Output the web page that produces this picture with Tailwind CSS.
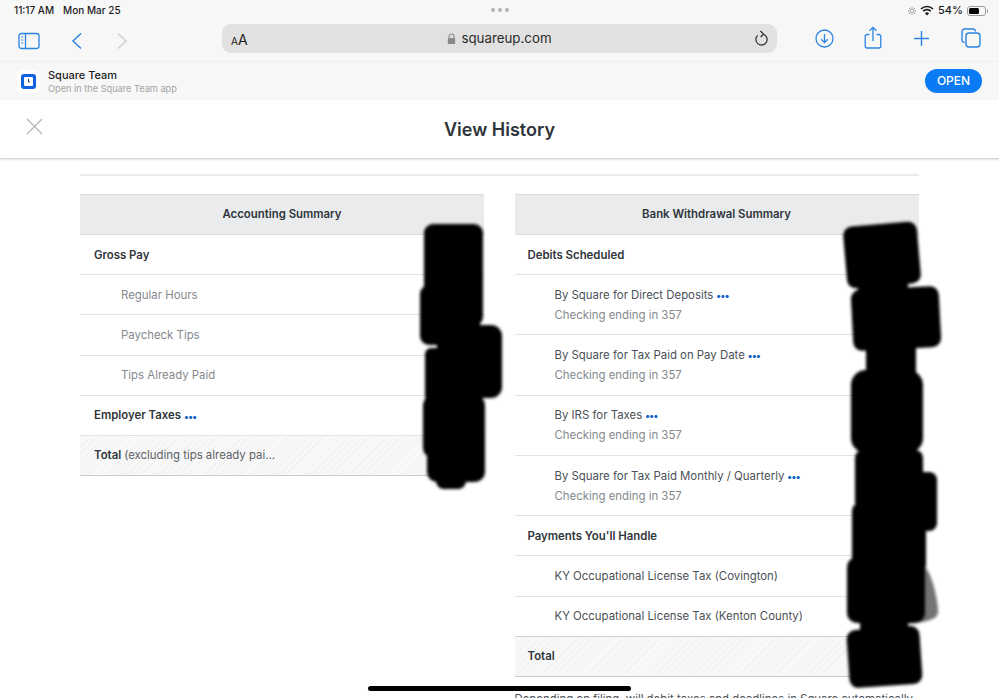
<!DOCTYPE html>
<html lang="en">
<head>
  <meta charset="UTF-8" />
  <title>View History</title>
  <script src="https://cdn.jsdelivr.net/npm/@tailwindcss/browser@4"></script>
</head>
<body class="bg-white font-['Inter',sans-serif] text-[#2f353b]">
<div class="relative w-[999px] h-[698px] overflow-hidden">

  <!-- Browser chrome -->
  <header class="h-[62px] bg-[#f7f7f7] border-b border-[#efefef]">
    <div class="h-[20px] pt-[1px] px-[14px] flex items-center justify-between text-[10px] text-[#1c1c1e] relative">
      <div class="flex gap-[9px] font-medium"><span>11:17 AM</span><span>Mon Mar 25</span></div>
      <div class="absolute left-[491px] top-[8px] flex gap-[3px]">
        <span class="w-[4px] h-[4px] rounded-full bg-[#b5b5b5]"></span>
        <span class="w-[4px] h-[4px] rounded-full bg-[#b5b5b5]"></span>
        <span class="w-[4px] h-[4px] rounded-full bg-[#b5b5b5]"></span>
      </div>
      <div class="flex items-center gap-[3px] font-medium text-[11px] mr-[-1px]">
        <svg width="10" height="10" viewBox="0 0 10 10" stroke="#9a9a9a" stroke-width="1"><path d="M5 1v3M5 6v3M1 5h3M6 5h3M2 2l2 2M6 6l2 2M8 2L6 4M4 6L2 8"/></svg>
        <svg width="14" height="11" viewBox="0 0 14 11" fill="none" stroke="#1c1c1e" stroke-width="1.7"><path d="M1 4a8.5 8.5 0 0 1 12 0M3.2 6.2a5.4 5.4 0 0 1 7.6 0"/><path d="M7 10.5 4.9 8.2a3 3 0 0 1 4.2 0Z" fill="#1c1c1e" stroke="none"/></svg>
        <span class="ml-[1px]">54%</span>
        <span class="relative ml-[1px] w-[19px] h-[10px] rounded-[3px] border border-[#9c9c9c] p-[1px] flex">
          <span class="w-[10px] bg-black rounded-[1.5px]"></span>
          <span class="absolute right-[-3px] top-[2px] w-[1.5px] h-[4px] bg-[#9c9c9c] rounded-r"></span>
        </span>
      </div>
    </div>
    <div class="relative h-[41px] flex items-center">
      <svg class="ml-[18px]" width="23" height="18" viewBox="0 0 23 18" fill="none" stroke="#2a84e0" stroke-width="1.3"><rect x="1" y="1.5" width="20" height="15" rx="2.5"/><path d="M7.5 1.5v15"/><path d="M3.2 5h2M3.2 8h2M3.2 11h2" stroke-width="1.2"/></svg>
      <svg class="ml-[30px]" width="12" height="18" viewBox="0 0 12 18" fill="none" stroke="#2a84e0" stroke-width="1.5"><path d="M10 1.5 2 9l8 7.5"/></svg>
      <svg class="ml-[33px]" width="12" height="18" viewBox="0 0 12 18" fill="none" stroke="#d0d0d0" stroke-width="1.5"><path d="M2 1.5 10 9l-8 7.5"/></svg>
      <div class="absolute left-[222px] top-[4px] w-[555px] h-[29px] pt-[1px] rounded-[9px] bg-[#e1e1e1] flex items-center justify-center">
        <span class="absolute left-[9px] top-[6px] text-[#222] leading-[18px]"><span class="text-[10px]">A</span><span class="text-[14px]">A</span></span>
        <svg class="mr-[5px]" width="9" height="12" viewBox="0 0 9 12"><path d="M2 5V3.5a2.5 2.5 0 0 1 5 0V5" fill="none" stroke="#8a8a8a" stroke-width="1.1"/><rect x="0.8" y="5" width="7.4" height="6" rx="1" fill="#8a8a8a"/></svg>
        <span class="text-[13.3px] text-[#2b2b2b]">squareup.com</span>
        <svg class="absolute right-[8px] top-[6px]" width="15" height="17" viewBox="0 0 15 17" fill="none" stroke="#2b2b2b" stroke-width="1.2"><path d="M9.500 4.200A5.600 5.600 0 1 1 3.600 5.400"/><path d="M6.400 1 9.600 4.200 6.600 7"/></svg>
      </div>
      <svg class="absolute left-[815px] top-[9px]" width="19" height="19" viewBox="0 0 19 19" fill="none" stroke="#2a84e0" stroke-width="1.3"><circle cx="9.5" cy="9.5" r="8.5"/><path d="M9.5 5v8.5M6.2 10.3l3.3 3.3 3.3-3.3"/></svg>
      <svg class="absolute left-[864px] top-[6px]" width="18" height="23" viewBox="0 0 18 23" fill="none" stroke="#2a84e0" stroke-width="1.3"><path d="M5.5 8.5H3a1.8 1.8 0 0 0-1.8 1.8v9.9A1.8 1.8 0 0 0 3 22h12a1.8 1.8 0 0 0 1.8-1.8v-9.9A1.8 1.8 0 0 0 15 8.500h-2.500"/><path d="M9 15V1.500M5.600 4.800 9 1.400l3.400 3.400"/></svg>
      <svg class="absolute left-[913px] top-[10px]" width="17" height="17" viewBox="0 0 17 17" fill="none" stroke="#2a84e0" stroke-width="1.4"><path d="M8.500 1v15M1 8.500h15"/></svg>
      <svg class="absolute left-[961px] top-[8px]" width="20" height="20" viewBox="0 0 20 20" fill="none" stroke="#2a84e0" stroke-width="1.4"><rect x="5" y="5" width="14" height="14" rx="3"/><path d="M3.500 14.500A2.500 2.500 0 0 1 1 12V3.500A2.500 2.500 0 0 1 3.500 1H12a2.500 2.500 0 0 1 2.500 2.500"/></svg>
    </div>
  </header>

  <!-- App banner -->
  <div class="h-[38px] bg-[#f7f7f7] flex items-center pl-[17px] pr-[17px]">
    <div class="w-[23px] h-[23px] rounded-[5px] bg-white flex items-center justify-center">
      <div class="w-[15px] h-[15px] rounded-[3px] bg-[#0f62e0] flex items-center justify-center">
        <svg width="9" height="9" viewBox="0 0 9 9"><rect width="9" height="9" rx="1" fill="#fff"/><path d="M4.500 2v3h1.500" fill="none" stroke="#123a7a" stroke-width="1"/></svg>
      </div>
    </div>
    <div class="ml-[8px] pt-[1px] flex-1">
      <div class="text-[11px] leading-[13px] font-medium text-[#1c1c1e]">Square Team</div>
      <div class="text-[9.2px] leading-[13px] text-[#a3a3a3]">Open in the Square Team app</div>
    </div>
    <button class="w-[57px] h-[24px] rounded-full bg-[#0a7bf5] text-white text-[12px] font-medium">OPEN</button>
  </div>

  <!-- Modal header -->
  <div class="relative h-[59px] pt-[1px] bg-white border-b border-[#d6d6d6] shadow-[0_1px_2px_rgba(0,0,0,0.12)] flex items-center justify-center">
    <svg class="absolute left-[26px] top-[18px]" width="17" height="17" viewBox="0 0 17 17" stroke="#b8b8b8" stroke-width="1.4"><path d="M1 1l15 15M16 1 1 16"/></svg>
    <h1 class="text-[18px] font-semibold text-[#2f353b]">View History</h1>
  </div>

  <!-- Content -->
  <main class="px-[80px] pt-[15px]">
    <div class="border-t-2 border-[#ececec] w-[839px]"></div>
    <div class="mt-[18px] flex gap-[30.500px] w-[839px] text-[11.4px]">

      <section class="w-[404px]">
        <div class="h-[41px] pt-[1px] flex items-center justify-center bg-[#e9ebed] border-t border-b border-[#d9dbdd] font-semibold">Accounting Summary</div>
        <div class="h-[40.180px] pt-[1px] flex items-center pl-[14px] border-b border-[#e3e3e3] font-semibold">Gross Pay</div>
        <div class="h-[40.180px] pt-[1px] flex items-center pl-[41px] border-b border-[#e3e3e3] text-[#85898d]">Regular Hours</div>
        <div class="h-[40.180px] pt-[1px] flex items-center pl-[41px] border-b border-[#e3e3e3] text-[#85898d]">Paycheck Tips</div>
        <div class="h-[40.180px] pt-[1px] flex items-center pl-[41px] border-b border-[#e3e3e3] text-[#85898d]">Tips Already Paid</div>
        <div class="h-[40.180px] pt-[1px] flex items-center pl-[14px] border-b border-[#e3e3e3] font-semibold">Employer Taxes<span class="ml-[3px] text-[10px] text-[#0f62c9] font-bold tracking-[-0.6px] leading-none">•••</span></div>
        <div class="h-[40.180px] pt-[1px] flex items-center pl-[14px] border-b border-[#c9c9c9] bg-[repeating-linear-gradient(135deg,#f0f0f0_0,#f0f0f0_1px,#fbfbfb_1px,#fbfbfb_2.500px)]"><span class="font-semibold">Total</span><span class="ml-[3px] text-[#5c6167]">(excluding tips already pai...</span></div>
      </section>

      <section class="w-[404px]">
        <div class="h-[41px] pt-[1px] flex items-center justify-center bg-[#e9ebed] border-t border-b border-[#d9dbdd] font-semibold">Bank Withdrawal Summary</div>
        <div class="h-[40.180px] pt-[1px] flex items-center pl-[13px] border-b border-[#e3e3e3] font-semibold">Debits Scheduled</div>
        <div class="h-[60.270px] pt-[1px] flex flex-col justify-center pl-[40px] border-b border-[#e3e3e3] gap-[5px] leading-[15px]">
          <div class="text-[#4a5056]">By Square for Direct Deposits<span class="ml-[3px] text-[10px] text-[#0f62c9] font-bold tracking-[-0.6px]">•••</span></div>
          <div class="text-[#85898d]">Checking ending in 357</div>
        </div>
        <div class="h-[60.270px] pt-[1px] flex flex-col justify-center pl-[40px] border-b border-[#e3e3e3] gap-[5px] leading-[15px]">
          <div class="text-[#4a5056]">By Square for Tax Paid on Pay Date<span class="ml-[3px] text-[10px] text-[#0f62c9] font-bold tracking-[-0.6px]">•••</span></div>
          <div class="text-[#85898d]">Checking ending in 357</div>
        </div>
        <div class="h-[60.270px] pt-[1px] flex flex-col justify-center pl-[40px] border-b border-[#e3e3e3] gap-[5px] leading-[15px]">
          <div class="text-[#4a5056]">By IRS for Taxes<span class="ml-[3px] text-[10px] text-[#0f62c9] font-bold tracking-[-0.6px]">•••</span></div>
          <div class="text-[#85898d]">Checking ending in 357</div>
        </div>
        <div class="h-[60.270px] pt-[1px] flex flex-col justify-center pl-[40px] border-b border-[#e3e3e3] gap-[5px] leading-[15px]">
          <div class="text-[#4a5056]">By Square for Tax Paid Monthly / Quarterly<span class="ml-[3px] text-[10px] text-[#0f62c9] font-bold tracking-[-0.6px]">•••</span></div>
          <div class="text-[#85898d]">Checking ending in 357</div>
        </div>
        <div class="h-[40.180px] pt-[1px] flex items-center pl-[13px] border-b border-[#e3e3e3] font-semibold">Payments You'll Handle</div>
        <div class="h-[40.180px] pt-[1px] flex items-center pl-[40px] border-b border-[#e3e3e3] text-[#4a5056]">KY Occupational License Tax (Covington)</div>
        <div class="h-[40.180px] pt-[1px] flex items-center pl-[40px] border-b border-[#d0d0d0] text-[#4a5056]">KY Occupational License Tax (Kenton County)</div>
        <div class="h-[40.180px] pt-[1px] flex items-center pl-[13px] border-b border-[#c9c9c9] font-semibold bg-[repeating-linear-gradient(135deg,#f0f0f0_0,#f0f0f0_1px,#fbfbfb_1px,#fbfbfb_2.500px)]">Total</div>
        <p class="mt-[14px] whitespace-nowrap text-[#4a5056]">Depending on filing, will debit taxes and deadlines in Square automatically</p>
      </section>
    </div>
  </main>

  <!-- Redaction scribbles drawn over the screenshot -->
  <svg class="absolute left-0 top-0 blur-[1.5px]" width="999" height="698" viewBox="0 0 999 698">
    <g fill="#000">
      <rect x="424" y="224" width="59" height="102" rx="9"/>
      <rect x="420" y="285" width="60" height="60" rx="9"/>
      <rect x="437" y="325" width="65" height="73" rx="11"/>
      <rect x="425" y="348" width="54" height="54" rx="6"/>
      <rect x="423" y="395" width="62" height="63" rx="10"/>
      <rect x="427" y="412" width="58" height="70" rx="10"/>
      <rect x="436" y="470" width="30" height="19" rx="8"/>

      <rect x="845" y="224" width="74" height="62" rx="9" transform="rotate(-5 882 255)"/>
      <rect x="858" y="278" width="50" height="16"/>
      <rect x="852" y="288" width="88" height="61" rx="9" transform="rotate(-3 896 318)"/>
      <rect x="866" y="345" width="50" height="30"/>
      <rect x="851" y="370" width="72" height="83" rx="15"/>
      <rect x="855" y="450" width="68" height="60" rx="8"/>
      <rect x="880" y="472" width="57" height="59" rx="8"/>
      <rect x="852" y="503" width="74" height="70" rx="8"/>
      <rect x="847" y="557" width="78" height="66" rx="10"/>
      <rect x="860" y="616" width="48" height="18"/>
      <rect x="848" y="628" width="73" height="58" rx="9" transform="rotate(-4 884 657)"/>
    </g>
    <path d="M926 568 C932 575 938 600 938 612 C938 620 925 622 908 624 L905 600Z" fill="#000" fill-opacity="0.55"/>
  </svg>

  <!-- Home indicator -->
  <div class="absolute left-[368px] top-[686px] w-[263px] h-[5px] rounded-full bg-black"></div>
</div>
</body>
</html>
